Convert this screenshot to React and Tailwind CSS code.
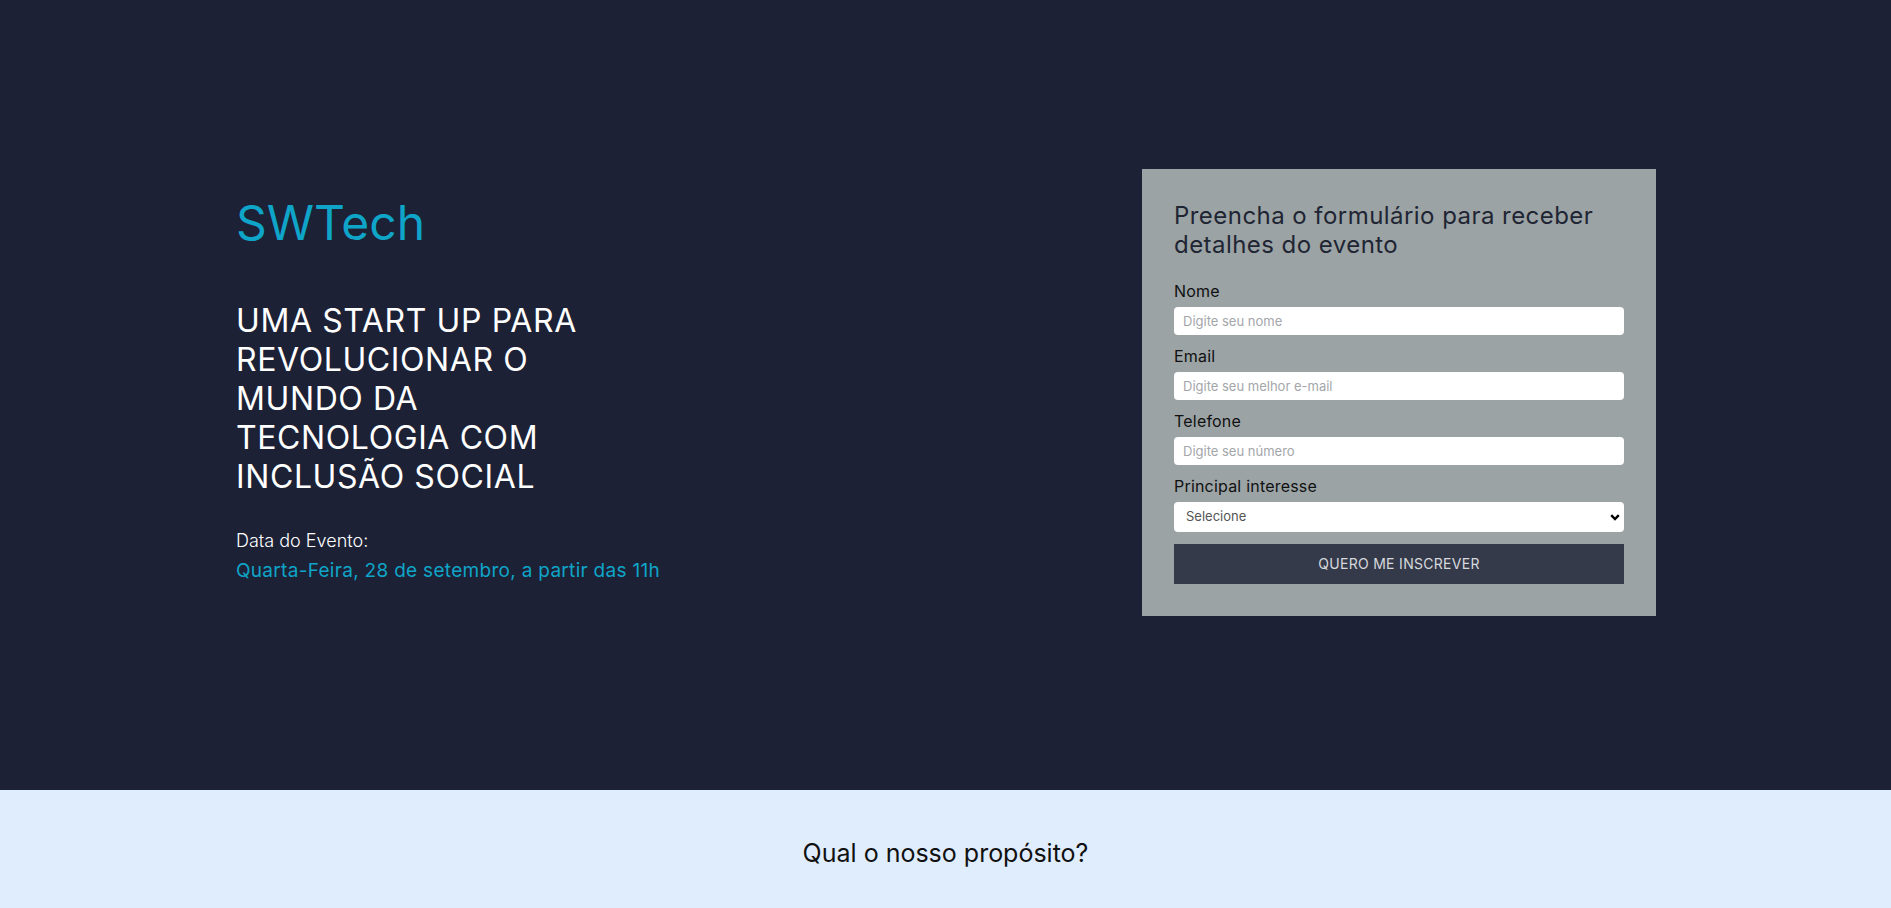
import React from 'react';

const App = () => {
  const fields = [
    { id: 'nome', label: 'Nome', placeholder: 'Digite seu nome' },
    { id: 'email', label: 'Email', placeholder: 'Digite seu melhor e-mail' },
    { id: 'telefone', label: 'Telefone', placeholder: 'Digite seu número' }
  ];

  return (
    <div className="min-h-screen font-['Inter',sans-serif]">
      {/* Hero */}
      <section className="bg-[#1c2136] h-[790px] flex items-start justify-between pl-[236px] pr-[235px] pt-[169px]">
        <div className="mt-[25px]">
          <h1 className="text-[48px] leading-[58px] text-[#0fa5c8] font-normal">SWTech</h1>
          <h2 className="mt-[49px] text-[32px] leading-[39px] tracking-[0.6px] text-white font-normal">
            UMA START UP PARA<br />
            REVOLUCIONAR O<br />
            MUNDO DA<br />
            TECNOLOGIA COM<br />
            INCLUSÃO SOCIAL
          </h2>
          <p className="mt-[30px] text-[18px] leading-[30px] text-white font-light">Data do Evento:</p>
          <p className="text-[19px] leading-[30px] tracking-[0.3px] text-[#0fa5c8]">Quarta-Feira, 28 de setembro, a partir das 11h</p>
        </div>

        {/* Form */}
        <form className="w-[514px] shrink-0 bg-[#9ba3a5] px-[32px] pt-[33px] pb-[32px]">
          <h3 className="text-[24px] leading-[28.8px] tracking-[0.45px] text-[#1f2533] font-normal mb-[19px]">
            Preencha o formulário para receber detalhes do evento
          </h3>
          {fields.map((f) => (
            <div key={f.id} className="mb-[9px]">
              <label htmlFor={f.id} className="block text-[16px] leading-[24px] tracking-[0.2px] text-[#111] mb-[4px]">{f.label}</label>
              <input
                id={f.id}
                placeholder={f.placeholder}
                className="block w-full h-[28px] bg-white rounded-[4px] px-[9px] text-[13px] placeholder:text-[#a3a6aa] outline-none"
              />
            </div>
          ))}
          <div>
            <label htmlFor="interesse" className="block text-[16px] leading-[24px] tracking-[0.2px] text-[#111] mb-[4px]">Principal interesse</label>
            <div className="relative">
              <select
                id="interesse"
                defaultValue=""
                className="block w-full h-[30px] bg-white rounded-[4px] pl-[12px] pr-[28px] text-[13px] text-[#555] appearance-none outline-none"
              >
                <option value="">Selecione</option>
              </select>
              <svg className="absolute right-[4px] top-[12px] pointer-events-none" width="10" height="7" viewBox="0 0 10 7">
                <path d="M1.2 1.2 L5 5 L8.8 1.2" fill="none" stroke="#000" strokeWidth="2.4" />
              </svg>
            </div>
          </div>
          <button type="button" className="mt-[12px] w-full h-[40px] bg-[#353a4a] text-[#d6d9de] text-[14px] tracking-[0.3px] uppercase">
            Quero me inscrever
          </button>
        </form>
      </section>

      {/* Propósito */}
      <section className="bg-[#e0edfd] pt-[47px] pb-[60px] text-center">
        <h2 className="text-[25px] leading-[32px] text-[#111] font-normal">Qual o nosso propósito?</h2>
      </section>
    </div>
  );
};

export default App;
